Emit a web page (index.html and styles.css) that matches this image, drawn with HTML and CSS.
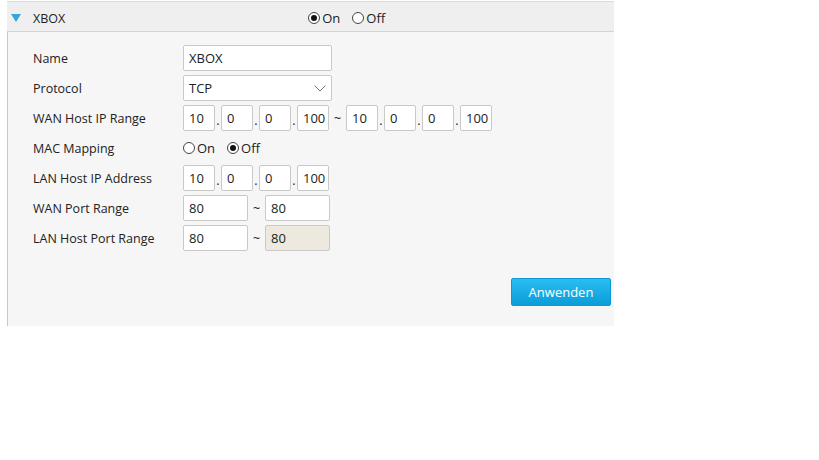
FILE: index.html
```html
<!DOCTYPE html>
<html>
<head lang="de">
    <meta charset="UTF-8">
    <title>Port Forwarding - XBOX</title>
    <link rel="stylesheet" href="styles.css">
</head>
<body>
<div class="panel">
    <div class="panel-head">
        <span class="arrow"></span>
        <span class="title">XBOX</span>
        <div class="radios head-radios">
            <span class="radio on"></span><span class="rlabel">On</span>
            <span class="radio"></span><span class="rlabel">Off</span>
        </div>
    </div>
    <div class="panel-body">
        <div class="row">
            <label>Name</label>
            <div class="field"><span class="box wide">XBOX</span></div>
        </div>
        <div class="row">
            <label>Protocol</label>
            <div class="field">
                <span class="box wide select">TCP
                    <svg class="chev" width="12" height="7" viewBox="0 0 12 7"><path d="M0.5 0.5 L6 6 L11.5 0.5" fill="none" stroke="#777" stroke-width="1"/></svg>
                </span>
            </div>
        </div>
        <div class="row">
            <label>WAN Host IP Range</label>
            <div class="field">
                <span class="box ip">10</span><span class="dot">.</span><span class="box ip">0</span><span class="dot">.</span><span class="box ip">0</span><span class="dot">.</span><span class="box ip">100</span>
                <span class="tilde">~</span>
                <span class="box ip">10</span><span class="dot">.</span><span class="box ip">0</span><span class="dot">.</span><span class="box ip">0</span><span class="dot">.</span><span class="box ip">100</span>
            </div>
        </div>
        <div class="row">
            <label>MAC Mapping</label>
            <div class="field radios">
                <span class="radio"></span><span class="rlabel">On</span>
                <span class="radio on"></span><span class="rlabel">Off</span>
            </div>
        </div>
        <div class="row">
            <label>LAN Host IP Address</label>
            <div class="field">
                <span class="box ip">10</span><span class="dot">.</span><span class="box ip">0</span><span class="dot">.</span><span class="box ip">0</span><span class="dot">.</span><span class="box ip">100</span>
            </div>
        </div>
        <div class="row">
            <label>WAN Port Range</label>
            <div class="field">
                <span class="box port">80</span><span class="tilde">~</span><span class="box port">80</span>
            </div>
        </div>
        <div class="row">
            <label>LAN Host Port Range</label>
            <div class="field">
                <span class="box port">80</span><span class="tilde">~</span><span class="box port disabled">80</span>
            </div>
        </div>
        <div class="actions">
            <button class="btn">Anwenden</button>
        </div>
    </div>
</div>
</body>
</html>
```
FILE: styles.css
```css
*{
    margin: 0;
    padding: 0;
    box-sizing: border-box;
}
body{
    background: #fff;
    font-family: "Open Sans", "Noto Sans", sans-serif;
    font-size: 12.5px;
    color: #222;
}
.panel{
    width: 607px;
    margin: 1px 0 0 7px;
}
.panel-head{
    height: 31px;
    background: #efefef;
    border-top: 1px solid #dadada;
    border-bottom: 1px solid #d4d4d4;
    display: flex;
    align-items: center;
    padding-top: 3px;
}
.arrow{
    width: 0;
    height: 0;
    border-left: 5px solid transparent;
    border-right: 5px solid transparent;
    border-top: 8px solid #34a6dc;
    margin-left: 4px;
}
.title{
    margin-left: 12px;
    color: #222;
}
.head-radios{
    margin-left: 243px;
}
.radios{
    display: flex;
    align-items: center;
}
.radio{
    width: 12px;
    height: 12px;
    border: 1px solid #444;
    border-radius: 50%;
    position: relative;
    background: #fff;
}
.radio.on::after{
    content: "";
    position: absolute;
    left: 2px;
    top: 2px;
    width: 6px;
    height: 6px;
    border-radius: 50%;
    background: #111;
}
.rlabel{
    margin-left: 2px;
    margin-right: 12px;
    font-size: 13px;
}
.panel-body{
    background: #f6f6f6;
    border-left: 1px solid #c8c8c8;
    padding: 11px 3px 20px 25px;
    height: 294px;
}
.row{
    display: flex;
    align-items: center;
    height: 30px;
}
.row label{
    width: 150px;
}
.field{
    display: flex;
    align-items: center;
}
.box{
    height: 26px;
    border: 1px solid #c9c9c9;
    border-radius: 2px;
    background: #fff;
    display: flex;
    align-items: center;
    padding-left: 5px;
    font-size: 13px;
}
.wide{
    width: 149px;
}
.select{
    justify-content: space-between;
    padding-right: 5px;
}
.chev{
    margin-top: 1px;
}
.ip{
    width: 32px;
}
.dot{
    width: 6px;
    text-align: center;
    padding-top: 4px;
}
.tilde{
    width: 17px;
    text-align: center;
}
.port{
    width: 65px;
}
.disabled{
    background: #ede9df;
}
.actions{
    display: flex;
    justify-content: flex-end;
    margin-top: 25px;
}
.btn{
    width: 100px;
    height: 28px;
    border: 1px solid #0c9ad2;
    border-radius: 2px;
    background: linear-gradient(#2bbcf2, #0a9dd6);
    color: #fff;
    font-family: "Open Sans", "Noto Sans", sans-serif;
    font-size: 13px;
}
```
